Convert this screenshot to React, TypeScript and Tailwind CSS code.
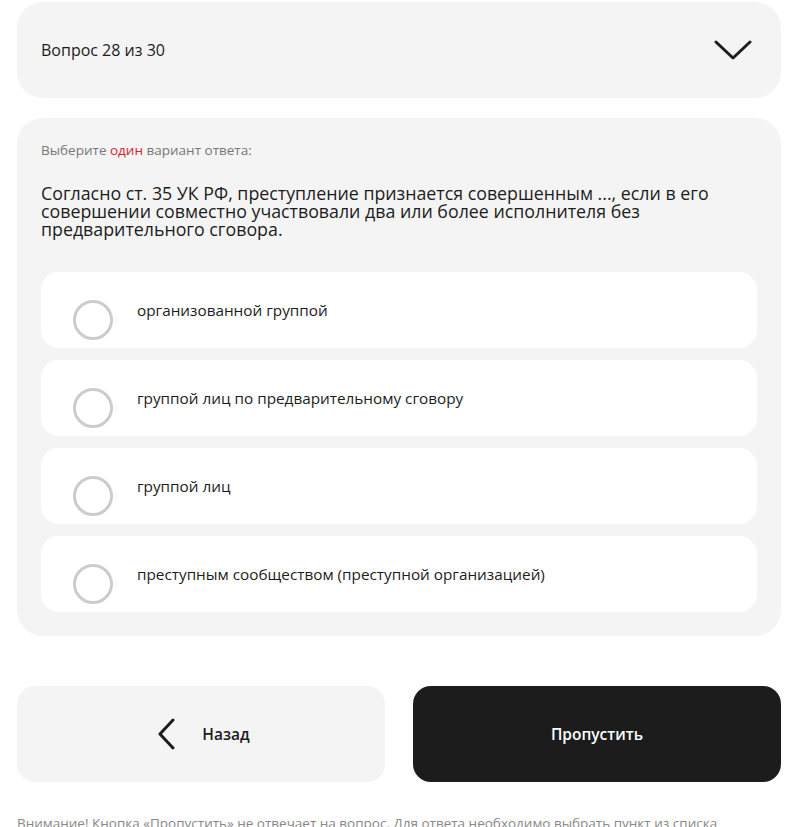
import { useState } from 'react';

const options = [
  'организованной группой',
  'группой лиц по предварительному сговору',
  'группой лиц',
  'преступным сообществом (преступной организацией)',
];

export default function App() {
  const [selected, setSelected] = useState<number | null>(null);

  return (
    <div
      className="h-screen overflow-hidden bg-white pl-[17px] pr-[5px] pt-[2px] text-[#1c1c1c]"
      style={{ fontFamily: '"Open Sans", "Noto Sans", sans-serif' }}
    >
      {/* Header */}
      <div className="flex h-[96px] items-center justify-between rounded-[26px] bg-[#f4f4f4] pl-6 pr-[29px]">
        <span className="text-[16px]">Вопрос 28 из 30</span>
        <svg width="38" height="22" viewBox="0 0 38 22" fill="none">
          <path d="M2 3 L19 19 L36 3" stroke="#1c1c1c" strokeWidth="3" strokeLinecap="round" strokeLinejoin="round" />
        </svg>
      </div>

      {/* Question */}
      <div className="mt-5 rounded-[26px] bg-[#f4f4f4] px-6 pb-6 pt-[22px]">
        <p className="text-[13.5px] text-[#777]">
          Выберите <span className="text-[#d61f2c]">один</span> вариант ответа:
        </p>
        <h2 className="mt-[24px] text-[17.8px] leading-[18px]">
          Согласно ст. 35 УК РФ, преступление признается совершенным ..., если в его совершении
          совместно участвовали два или более исполнителя без предварительного сговора.
        </h2>

        <div className="mt-[34px] flex flex-col gap-3">
          {options.map((option, i) => (
            <button
              key={option}
              onClick={() => setSelected(i)}
              className="flex h-[76px] items-center rounded-[18px] bg-white pl-8 text-left"
            >
              <span
                className={`mt-[19px] h-10 w-10 shrink-0 rounded-full border-[3px] ${
                  selected === i ? 'border-[#1c1c1c]' : 'border-[#cccccc]'
                }`}
              />
              <span className="ml-6 text-[15.3px]">{option}</span>
            </button>
          ))}
        </div>
      </div>

      {/* Actions */}
      <div className="mt-[50px] grid grid-cols-2 gap-7">
        <button className="flex h-24 items-center justify-center rounded-[18px] bg-[#f4f4f4] pl-1">
          <svg width="22" height="32" viewBox="0 0 22 32" fill="none">
            <path d="M17 2 L4 16 L17 30" stroke="#1c1c1c" strokeWidth="3" strokeLinecap="round" strokeLinejoin="round" />
          </svg>
          <span className="ml-[24px] text-[15.5px] font-semibold">Назад</span>
        </button>
        <button className="flex h-24 items-center justify-center rounded-[18px] bg-[#1c1c1c] text-[15.5px] font-semibold text-white">
          Пропустить
        </button>
      </div>

      <p className="mt-[31px] text-[13.5px] text-[#888]">
        Внимание! Кнопка «Пропустить» не отвечает на вопрос. Для ответа необходимо выбрать пункт из списка
      </p>
    </div>
  );
}
